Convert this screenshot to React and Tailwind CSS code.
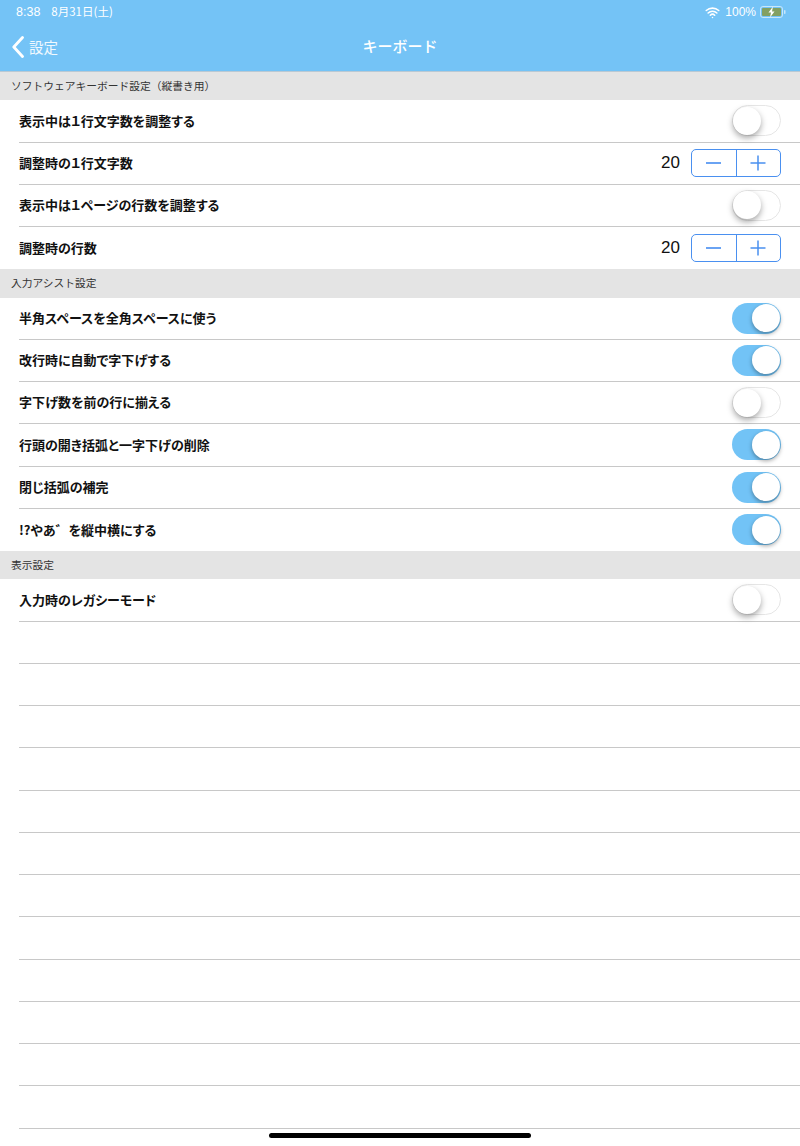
import { Wifi } from "lucide-react";

function Toggle({ on }) {
  if (on) {
    return (
      <div className="flex h-[31px] w-[49px] items-center justify-end rounded-full bg-[#72c3f6] pr-[1.5px]">
        <div className="h-[28px] w-[28px] rounded-full bg-white shadow-[0_2px_4px_rgba(0,0,0,0.35)]" />
      </div>
    );
  }
  return (
    <div className="flex h-[31px] w-[49px] items-center rounded-full border-[1.5px] border-[#e6e6e6] bg-white">
      <div className="h-[28px] w-[28px] rounded-full bg-white shadow-[0_3px_6px_rgba(0,0,0,0.35)]" />
    </div>
  );
}

function Stepper({ value }) {
  return (
    <div className="flex items-center">
      <span className="mr-[11px] font-['Liberation_Sans'] text-[17px] text-[#111]">{value}</span>
      <div className="flex h-[28px] w-[90px] rounded-[5px] border border-[#4a90f0]">
        <div className="flex flex-1 items-center justify-center border-r border-[#4a90f0]">
          <div className="h-[2px] w-[15px] bg-[#6aa3f3]" />
        </div>
        <div className="flex flex-1 items-center justify-center">
          <svg width="16" height="16" viewBox="0 0 16 16">
            <path d="M8 0.5V15.5M0.5 8H15.5" stroke="#4a90f0" strokeWidth="1.5" />
          </svg>
        </div>
      </div>
    </div>
  );
}

function Row({ label, noLine, children }) {
  return (
    <div
      className={`ml-[19px] flex h-[42.25px] items-center justify-between pr-[19px] ${
        noLine ? "" : "border-b border-[#c8c8c8]"
      }`}
    >
      <span className="pb-[1px] text-[13px] font-bold text-[#111] [font-feature-settings:'palt']">{label}</span>
      {children}
    </div>
  );
}

function Section({ title }) {
  return (
    <div className="flex h-[28.25px] items-center bg-[#e4e4e4] pb-[1px] pl-[11px] text-[10.75px] text-[#333]">
      {title}
    </div>
  );
}

function Battery() {
  return (
    <svg width="26" height="12" viewBox="0 0 26 12" className="block">
      <rect x="0.5" y="0.5" width="22" height="11" rx="2.5" fill="none" stroke="#ffffff" strokeOpacity="0.6" />
      <rect x="2" y="2" width="19" height="8" rx="1" fill="#83a062" />
      <path d="M13 0.5L8.5 6.5H11L10 11.5L14.5 5.5H12Z" fill="#ffffff" />
      <rect x="24" y="4" width="1.5" height="4" rx="0.7" fill="#ffffff" fillOpacity="0.6" />
    </svg>
  );
}

export default function App() {
  const emptyRows = Array.from({ length: 12 }, (_, i) => i);
  return (
    <div className="relative h-[1146px] w-[800px] overflow-hidden bg-white font-['Noto_Sans_CJK_JP','Noto_Sans',sans-serif]">
      <header className="h-[72px] border-b border-[#b9c9d4] bg-[#74c3f6] text-white">
        <div className="flex h-[24px] items-center justify-between pl-[16px] pr-[14px]">
          <div className="flex items-center gap-[11px] text-[11.5px]">
            <span className="font-['Liberation_Sans'] text-[12.5px]">8:38</span>
            <span>8月31日(土)</span>
          </div>
          <div className="flex items-center">
            <Wifi size={15} strokeWidth={2.5} className="mr-[5px]" />
            <span className="mr-[4px] font-['Liberation_Sans'] text-[12px]">100%</span>
            <Battery />
          </div>
        </div>
        <div className="relative flex h-[47px] items-center justify-center pb-[2px]">
          <div className="absolute inset-y-0 left-[12px] flex items-center gap-[5px] pb-[1px]">
            <svg width="12" height="22" viewBox="0 0 12 22">
              <path d="M10.5 1.5L1.8 11L10.5 20.5" fill="none" stroke="#ffffff" strokeWidth="2.8" strokeLinecap="round" strokeLinejoin="round" />
            </svg>
            <span className="text-[14.5px] text-white/90">設定</span>
          </div>
          <span className="text-[15px] font-medium">キーボード</span>
        </div>
      </header>

      <Section title="ソフトウェアキーボード設定（縦書き用）" />
      <Row label="表示中は１行文字数を調整する"><Toggle /></Row>
      <Row label="調整時の１行文字数"><Stepper value={20} /></Row>
      <Row label="表示中は１ページの行数を調整する"><Toggle /></Row>
      <Row label="調整時の行数" noLine><Stepper value={20} /></Row>

      <Section title="入力アシスト設定" />
      <Row label="半角スペースを全角スペースに使う"><Toggle on /></Row>
      <Row label="改行時に自動で字下げする"><Toggle on /></Row>
      <Row label="字下げ数を前の行に揃える"><Toggle /></Row>
      <Row label="行頭の開き括弧と一字下げの削除"><Toggle on /></Row>
      <Row label="閉じ括弧の補完"><Toggle on /></Row>
      <Row label="!?やあ゛を縦中横にする" noLine><Toggle on /></Row>

      <Section title="表示設定" />
      <Row label="入力時のレガシーモード"><Toggle /></Row>
      {emptyRows.map((i) => (
        <div key={i} className="ml-[19px] h-[42.25px] border-b border-[#c8c8c8]" />
      ))}

      <div className="absolute bottom-[8px] left-[269px] h-[5px] w-[262px] rounded-full bg-black" />
    </div>
  );
}
